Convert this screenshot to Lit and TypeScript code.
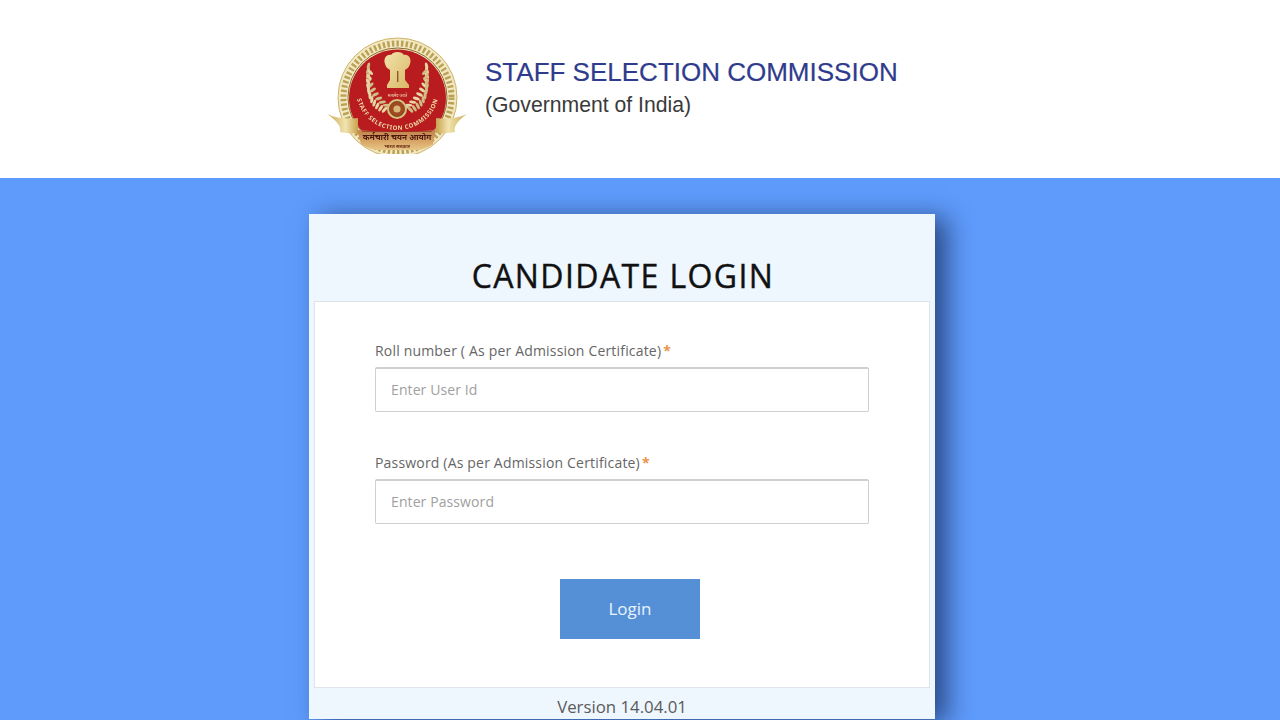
import { LitElement, html, css, svg } from "lit";
import { customElement } from "lit/decorators.js";

// one side of the laurel: leaf pairs along an arc round the emblem
const leaves = (side: number) => {
  const out = [];
  for (let i = 0; i < 11; i++) {
    const deg = 20 + i * 8.6;
    const a = (deg * Math.PI) / 180;
    const x = 397.5 + side * Math.sin(a) * 31;
    const y = 78 + Math.cos(a) * 31;
    const rot = side * deg;
    out.push(svg`
      <g transform="translate(${x} ${y}) rotate(${rot})">
        <ellipse cx="-3.6" cy="0" rx="3.6" ry="1.5" fill="#e6d6a6" transform="rotate(-28)"></ellipse>
        <ellipse cx="3.6" cy="0" rx="3.6" ry="1.5" fill="#cfbd84" transform="rotate(28)"></ellipse>
      </g>
    `);
  }
  return out;
};

@customElement("app-logo")
export class AppLogo extends LitElement {
  static styles = css`
    :host {
      display: block;
      width: 142px;
      height: 118px;
    }
    svg {
      display: block;
      filter: blur(0.5px);
    }
    text {
      font-family: "Noto Sans", "Liberation Sans", sans-serif;
    }
  `;

  render() {
    return html`
      <svg width="142" height="118" viewBox="327 36 142 118">
        <defs>
          <path id="arc" d="M 356 90 A 41.5 40 0 0 0 439 90"></path>
          <linearGradient id="gold" x1="0" x2="1" y1="0" y2="1">
            <stop offset="0" stop-color="#f3e3ac"></stop>
            <stop offset="1" stop-color="#d8b765"></stop>
          </linearGradient>
          <linearGradient id="wingl" x1="0" x2="1" y1="0" y2="0">
            <stop offset="0" stop-color="#c8a850"></stop>
            <stop offset="0.6" stop-color="#f1e4b0"></stop>
            <stop offset="1" stop-color="#c9a24e"></stop>
          </linearGradient>
          <linearGradient id="wingr" x1="1" x2="0" y1="0" y2="0">
            <stop offset="0" stop-color="#c8a850"></stop>
            <stop offset="0.6" stop-color="#f1e4b0"></stop>
            <stop offset="1" stop-color="#c9a24e"></stop>
          </linearGradient>
          <linearGradient id="band" x1="0" x2="0" y1="0" y2="1">
            <stop offset="0" stop-color="#c0804a"></stop>
            <stop offset="0.6" stop-color="#d8a868"></stop>
            <stop offset="1" stop-color="#e8c686"></stop>
          </linearGradient>
        </defs>

        <circle cx="397.5" cy="97.5" r="59.5" fill="#f3e8c4" stroke="#cdb265" stroke-width="1"></circle>
        <circle cx="397.5" cy="97.5" r="54" fill="none" stroke="#b9a254" stroke-width="6" stroke-dasharray="2.4 2.2"></circle>
        <circle cx="397.5" cy="97.5" r="49.5" fill="none" stroke="#8a6a2a" stroke-width="1"></circle>
        <circle cx="397.5" cy="98" r="48.5" fill="#b81c1e"></circle>

        ${leaves(-1)} ${leaves(1)}

        <!-- lion capital -->
        <path
          d="M385 64 C383 58 387 54 391 55 C393 51 402 51 404 55 C408 54 412 58 410 64 C409 68 406 69 405 70 L405 80 L409 85 L409 88 L387 88 L387 85 L390 80 L390 70 C389 69 386 68 385 64 Z"
          fill="url(#gold)"
        ></path>
        <rect x="397" y="71" width="1.4" height="11" fill="#8a5a28"></rect>
        <text x="397.5" y="97" text-anchor="middle" font-size="4" fill="#f0dfb0">सत्यमेव जयते</text>

        <!-- seal in the middle -->
        <circle cx="397" cy="109" r="10" fill="#d9c07c"></circle>
        <circle cx="397" cy="109" r="7.5" fill="#a04a22" stroke="#6e3a18" stroke-width="0.8"></circle>
        <circle cx="397" cy="109" r="3.6" fill="#d8b87a"></circle>

        <text font-size="6" font-weight="700" fill="#eedca8" letter-spacing="0.6">
          <textPath href="#arc" startOffset="50%" text-anchor="middle">STAFF SELECTION COMMISSION</textPath>
        </text>

        <!-- ribbon -->
        <path d="M327 114 C338 119 348 119 358 118 L358 133 C352 134 345 133 340 132 C342 127 336 120 327 114 Z" fill="url(#wingl)"></path>
        <path d="M467 114 C456 119 446 119 436 118 L436 133 C442 134 449 133 455 132 C453 127 458 120 467 114 Z" fill="url(#wingr)"></path>
        <path d="M357 130 Q397 134 436 130 L433 144 Q428 148 418 150 L377 150 Q366 148 361 144 Z" fill="url(#band)"></path>
        <rect x="362" y="131" width="70" height="1" fill="#8f2a1c" opacity="0.6"></rect>
        <text x="397" y="140" text-anchor="middle" font-size="8.2" font-weight="700" fill="#4e1a10">कर्मचारी चयन आयोग</text>
        <text x="397" y="148" text-anchor="middle" font-size="5" font-weight="700" fill="#6a2a14">भारत सरकार</text>
      </svg>
    `;
  }
}

@customElement("app-root")
export class AppRoot extends LitElement {
  static styles = css`
    :host {
      display: block;
      width: 1280px;
      height: 720px;
      overflow: hidden;
      background: #5f9bfb;
      font-family: "Open Sans", sans-serif;
    }

    .top {
      height: 178px;
      box-sizing: border-box;
      background: #fff;
      padding: 36px 0 0 327px;
      display: flex;
      gap: 16px;
    }

    .org {
      padding-top: 20px;
      font-family: "Liberation Sans", sans-serif;
    }
    .org h1 {
      margin: 0;
      font-size: 26px;
      line-height: 32px;
      font-weight: 400;
      color: #2f3b8c;
      -webkit-text-stroke: 0.2px #2f3b8c;
    }
    .org p {
      margin: 0;
      font-size: 21.2px;
      line-height: 33px;
      color: #3a3a3a;
    }

    .card {
      width: 626px;
      height: 505px;
      box-sizing: border-box;
      margin: 36px 0 0 309px;
      padding: 0 5px;
      background: #eef6fe;
      box-shadow: 12px 4px 24px rgba(15, 30, 70, 0.65);
    }

    .title {
      margin: 0;
      height: 87px;
      box-sizing: border-box;
      padding: 40px 0 0 2px;
      text-align: center;
      font-size: 32px;
      line-height: 44px;
      font-weight: 400;
      color: #111;
      letter-spacing: 1.4px;
      -webkit-text-stroke: 0.4px #111;
    }

    .panel {
      height: 387px;
      box-sizing: border-box;
      background: #fff;
      border: 1px solid #dfe4ec;
      padding: 39px 60px 0;
    }

    .field {
      margin-bottom: 41px;
    }
    .field label {
      display: block;
      font-size: 14px;
      line-height: 20px;
      margin-bottom: 6px;
      color: #666;
      letter-spacing: 0.18px;
    }
    .req {
      color: #e8954a;
      font-weight: 700;
      margin-left: 2px;
    }
    .field input {
      display: block;
      width: 100%;
      height: 45px;
      box-sizing: border-box;
      border: 1px solid #cfcfcf;
      border-top-width: 2px;
      border-radius: 2px;
      padding: 0 15px 1px;
      background: #fff;
      font: 14px "Open Sans", sans-serif;
      letter-spacing: 0.1px;
      color: #555;
      outline: none;
    }
    .field input::placeholder {
      color: #a0a0a0;
      opacity: 1;
    }

    .login {
      display: block;
      width: 140px;
      height: 60px;
      margin: 55px 0 0 185px;
      border: none;
      background: #5590d6;
      color: #e8f3ff;
      font: 17px "Open Sans", sans-serif;
      padding: 0 0 2px;
    }

    .version {
      text-align: center;
      font-size: 16.8px;
      line-height: 37px;
      color: #5a5a5a;
    }
  `;

  render() {
    return html`
      <header class="top">
        <app-logo></app-logo>
        <div class="org">
          <h1>STAFF SELECTION COMMISSION</h1>
          <p>(Government of India)</p>
        </div>
      </header>
      <main class="card">
        <h2 class="title">CANDIDATE LOGIN</h2>
        <form class="panel">
          <div class="field">
            <label>Roll number ( As per Admission Certificate)<span class="req">*</span></label>
            <input type="text" placeholder="Enter User Id" />
          </div>
          <div class="field">
            <label>Password (As per Admission Certificate)<span class="req">*</span></label>
            <input type="password" placeholder="Enter Password" />
          </div>
          <button class="login" type="button">Login</button>
        </form>
        <div class="version">Version 14.04.01</div>
      </main>
    `;
  }
}
